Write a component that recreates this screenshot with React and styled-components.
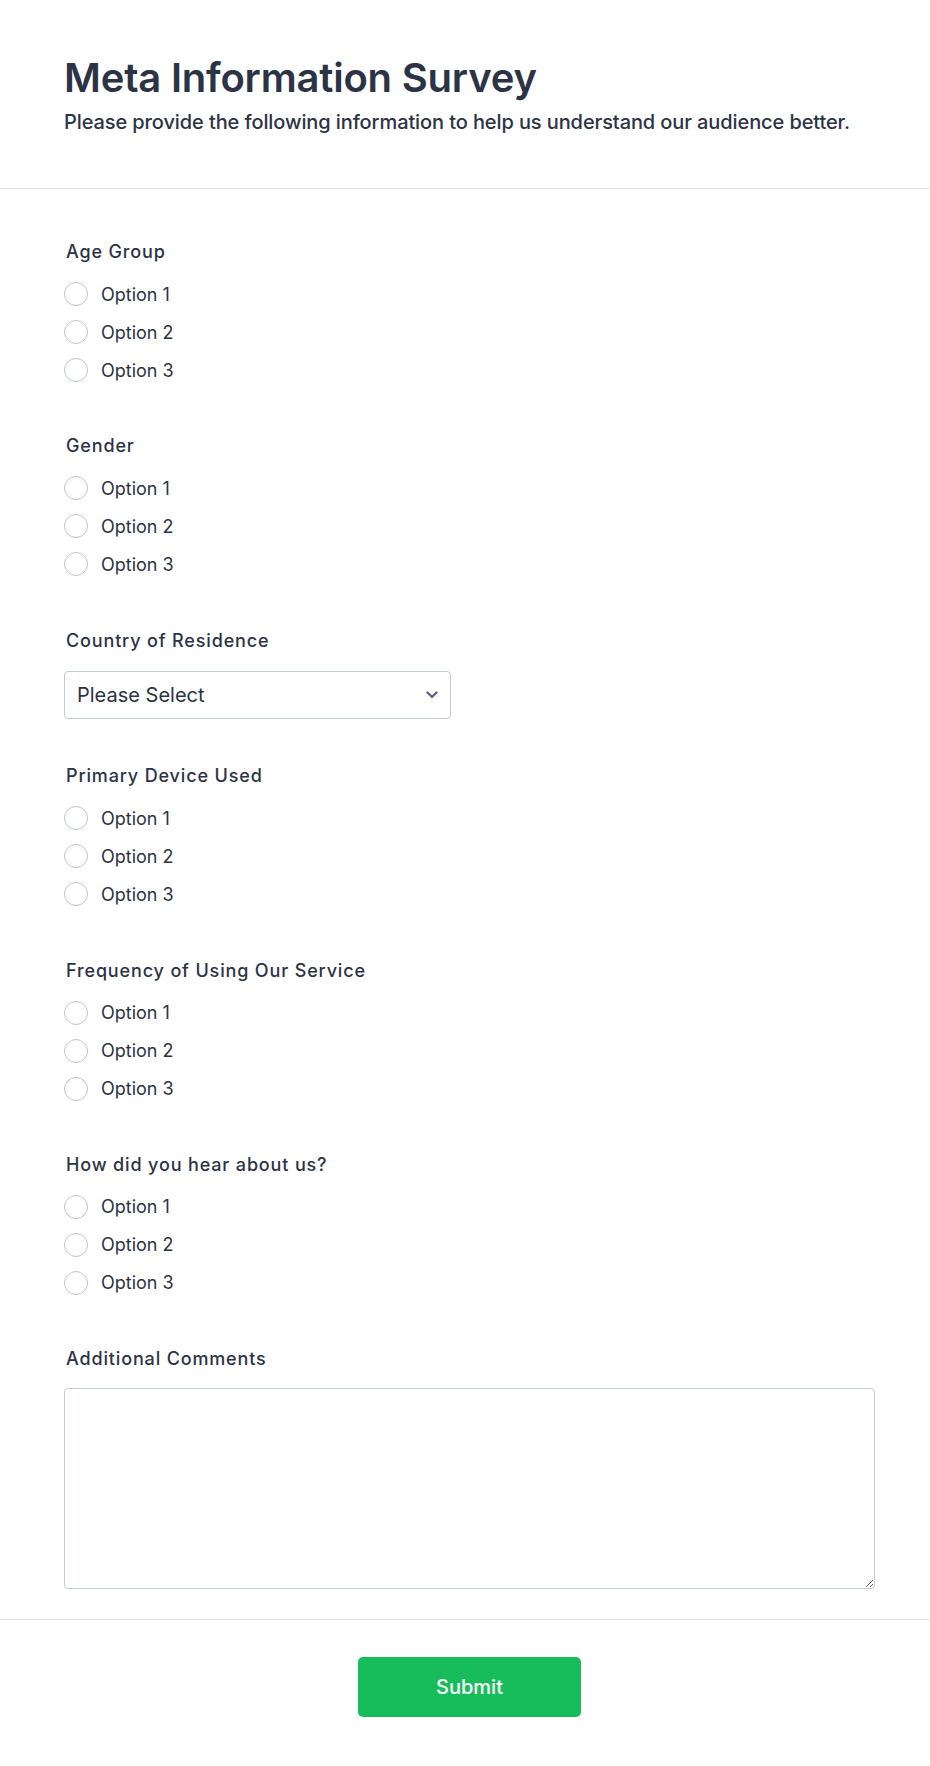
import React from "react";
import styled, { createGlobalStyle } from "styled-components";

const GlobalStyle = createGlobalStyle`
  html, body {
    margin: 0;
    padding: 0;
    background: #ffffff;
  }
  body {
    font-family: Inter, "Noto Sans", Arial, sans-serif;
    color: #2c3345;
    -webkit-font-smoothing: antialiased;
  }
  * { box-sizing: border-box; }
`;

const Page = styled.form`
  width: 930px;
  min-height: 1766px;
  background: #fff;
  display: flex;
  flex-direction: column;
`;

const Header = styled.header`
  padding: 54px 55px 52px 64px;
  border-bottom: 1px solid #e3e5f0;
`;

const Title = styled.h1`
  margin: 0;
  font-size: 40px;
  line-height: 48px;
  font-weight: 600;
  color: #2c3345;
  letter-spacing: -0.2px;
`;

const Subtitle = styled.p`
  margin: 6px 0 0;
  font-size: 20px;
  line-height: 28px;
  font-weight: 500;
  color: #2c3345;
  letter-spacing: -0.1px;
`;

const Body = styled.div`
  padding: 51px 55px 30px 64px;
  display: flex;
  flex-direction: column;
  gap: 45.4px;
  border-bottom: 1px solid #e3e5f0;
`;

const Field = styled.div`
  display: flex;
  flex-direction: column;
`;

const Label = styled.label`
  display: block;
  margin: 0 0 11px 2px;
  font-size: 18px;
  line-height: 24px;
  font-weight: 500;
  letter-spacing: 0.85px;
  color: #2c3345;
`;

const OptionList = styled.div`
  display: flex;
  flex-direction: column;
`;

const OptionRow = styled.label`
  height: 38px;
  display: flex;
  align-items: center;
  gap: 13px;
  font-size: 18px;
  font-weight: 400;
  color: #2c3345;
  cursor: pointer;
`;

const Radio = styled.input.attrs({ type: "radio" })`
  appearance: none;
  -webkit-appearance: none;
  margin: 0;
  width: 24px;
  height: 24px;
  border: 1px solid #bcc3d1;
  border-radius: 50%;
  background: #fff;
  flex: none;
`;

const SelectWrap = styled.div`
  position: relative;
  width: 387px;
  margin-top: 7px;
`;

const Select = styled.select`
  appearance: none;
  -webkit-appearance: none;
  width: 100%;
  height: 48px;
  border: 1px solid #c3cad8;
  border-radius: 4px;
  background: #fff;
  padding: 0 40px 0 12px;
  font-family: Inter, "Noto Sans", Arial, sans-serif;
  font-size: 20px;
  color: #2c3345;
  outline: none;
`;

const Chevron = styled.svg`
  position: absolute;
  right: 13px;
  top: 50%;
  transform: translateY(-50%);
  pointer-events: none;
`;

const TextArea = styled.textarea`
  display: block;
  width: 100%;
  height: 201px;
  margin-top: 6px;
  border: 1px solid #c3cad8;
  border-radius: 4px;
  padding: 10px 12px;
  font-family: Inter, "Noto Sans", Arial, sans-serif;
  font-size: 18px;
  color: #2c3345;
  resize: vertical;
  outline: none;
`;

const Footer = styled.footer`
  display: flex;
  justify-content: center;
  padding: 37px 55px 50px 64px;
`;

const SubmitButton = styled.button`
  width: 223px;
  height: 60px;
  border: none;
  border-radius: 5px;
  background: #18bd5b;
  color: #fff;
  font-family: Inter, "Noto Sans", Arial, sans-serif;
  font-size: 20px;
  font-weight: 500;
  cursor: pointer;
`;

const radioFields = (name) =>
  ["Option 1", "Option 2", "Option 3"].map((o) => (
    <OptionRow key={o}>
      <Radio name={name} value={o} />
      {o}
    </OptionRow>
  ));

function RadioField({ label, name }) {
  return (
    <Field>
      <Label>{label}</Label>
      <OptionList>{radioFields(name)}</OptionList>
    </Field>
  );
}

export default function App() {
  return (
    <>
      <GlobalStyle />
      <Page onSubmit={(e) => e.preventDefault()}>
        <Header>
          <Title>Meta Information Survey</Title>
          <Subtitle>
            Please provide the following information to help us understand our audience better.
          </Subtitle>
        </Header>
        <Body>
          <RadioField label="Age Group" name="age" />
          <RadioField label="Gender" name="gender" />
          <Field>
            <Label>Country of Residence</Label>
            <SelectWrap>
              <Select defaultValue="">
                <option value="">Please Select</option>
              </Select>
              <Chevron width="12" height="8" viewBox="0 0 12 8">
                <polyline
                  points="1.5,1.5 6,6 10.5,1.5"
                  fill="none"
                  stroke="#57647e"
                  strokeWidth="2.2"
                  strokeLinecap="round"
                  strokeLinejoin="round"
                />
              </Chevron>
            </SelectWrap>
          </Field>
          <RadioField label="Primary Device Used" name="device" />
          <RadioField label="Frequency of Using Our Service" name="frequency" />
          <RadioField label="How did you hear about us?" name="source" />
          <Field>
            <Label>Additional Comments</Label>
            <TextArea />
          </Field>
        </Body>
        <Footer>
          <SubmitButton type="submit">Submit</SubmitButton>
        </Footer>
      </Page>
    </>
  );
}
